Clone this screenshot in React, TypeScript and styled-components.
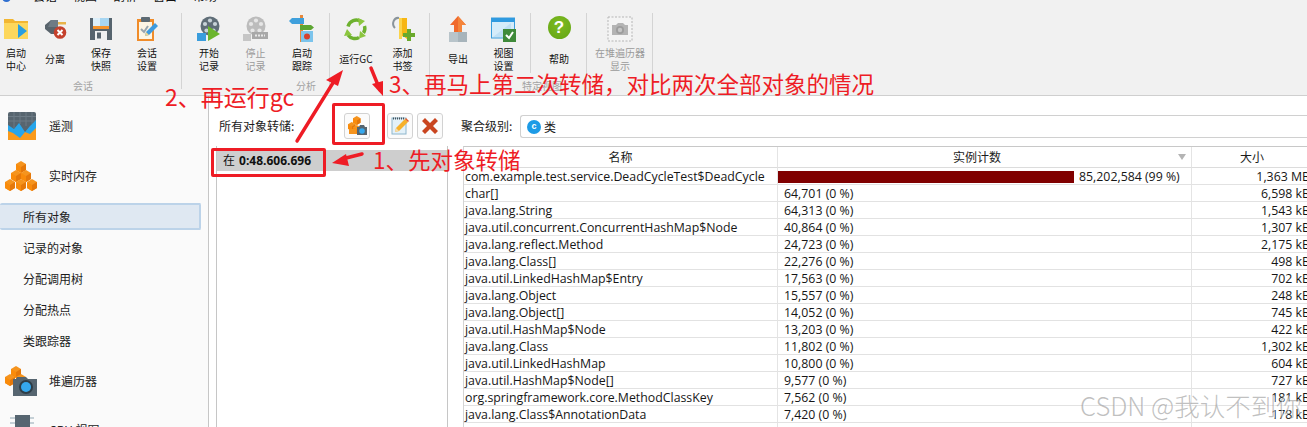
import React from 'react';
import styled, {createGlobalStyle} from 'styled-components';

const UI_FONT = '"Open Sans", "Noto Sans CJK SC", sans-serif';
const CJK_FONT = '"Noto Sans CJK SC", "Open Sans", sans-serif';
const RED = '#ee1c25';

const GlobalStyle = createGlobalStyle`
  html, body {
    margin: 0;
    padding: 0;
    background: #fff;
  }
  * {
    box-sizing: border-box;
  }
`;

/* ---------- icons ---------- */

const FolderIcon = () => (
  <svg width="26" height="24" viewBox="0 0 26 24">
    <path d="M1 2h9l2 2h13v18H1z" fill="#f2b632" />
    <rect x="1" y="6" width="24" height="16" fill="#fdd75c" />
    <path d="M15 7l9 7-9 7z" fill="#2a9fe0" />
  </svg>
);

const PlugIcon = () => (
  <svg width="26" height="24" viewBox="0 0 26 24">
    <rect x="15" y="5" width="9" height="2.5" fill="#e8b34a" />
    <path d="M3 8l6-5h7v14H9l-6-5z" fill="#59646c" />
    <path d="M9 3h7v7H6z" fill="#6f7b84" />
    <circle cx="18" cy="15.5" r="6.3" fill="#c5412c" />
    <path d="M15.5 13l5 5m0-5l-5 5" stroke="#fff" strokeWidth="2" />
  </svg>
);

const FloppyIcon = () => (
  <svg width="24" height="24" viewBox="0 0 24 24">
    <path d="M1 1h22v22H1z" fill="#56646e" />
    <rect x="4" y="1" width="16" height="9" fill="#dceffa" />
    <rect x="11" y="1" width="9" height="9" fill="#a7d6f2" />
    <rect x="4" y="9" width="16" height="3" fill="#f5942b" />
    <rect x="6" y="14" width="12" height="9" fill="#eef0f1" />
    <rect x="8" y="15.5" width="4" height="6" fill="#56646e" />
  </svg>
);

const SessionIcon = () => (
  <svg width="24" height="26" viewBox="0 0 24 26">
    <rect x="2" y="3" width="17" height="22" fill="#f08c2a" />
    <rect x="4" y="6" width="13" height="17" fill="#fdf5e4" />
    <rect x="6" y="1" width="9" height="5" rx="1" fill="#5d6a73" />
    <path d="M6 13l3 3 4-6" stroke="#9aa5ad" strokeWidth="2" fill="none" />
    <path d="M10 20l1-4 9-9 3 3-9 9z" fill="#3d9be0" />
    <path d="M10 20l1-4 3 3z" fill="#f4d58a" />
  </svg>
);

const ReelIcon = ({muted}: {muted?: boolean}) => (
  <svg width="27" height="26" viewBox="0 0 27 26">
    <circle cx="14" cy="10" r="9.5" fill={muted ? '#bcbcbc' : '#5f6d77'} />
    {[[14, 4.5], [19, 8], [17.5, 14.5], [10.5, 14.5], [9, 8]].map(([x, y]) => (
      <circle key={`${x}-${y}`} cx={x} cy={y} r="2.1" fill={muted ? '#e6e6e6' : '#c8d2d8'} />
    ))}
    {muted ? (
      <>
        <rect x="1" y="18" width="8" height="7" fill="#c6c6c6" />
        <path d="M10 16h16v7H10z" fill="#a8a8a8" />
        <path d="M13 19.5h10" stroke="#e8e8e8" strokeWidth="2" strokeDasharray="2 1" />
      </>
    ) : (
      <>
        <rect x="1" y="17" width="9" height="8" fill="#3a9ddc" />
        <path d="M12 10l12 8-12 7z" fill="#6cb52d" />
      </>
    )}
  </svg>
);

const TrackIcon = () => (
  <svg width="26" height="28" viewBox="0 0 26 28">
    <rect x="11" y="0" width="3" height="27" fill="#e8883a" />
    <path d="M0 6l3-3h12v6H3z" fill="#3fa0dc" />
    <path d="M11 10h11l3 2.5-3 2.5H11z" fill="#5da632" />
    <rect x="12" y="16" width="12" height="11" fill="#7cc4ec" />
    <circle cx="18" cy="21.5" r="3" fill="#d6402b" />
  </svg>
);

const RecycleIcon = () => (
  <svg width="26" height="24" viewBox="0 0 26 24">
    <g fill="none" stroke="#6db12f" strokeWidth="3.4">
      <path d="M5 9.5a8.5 8.5 0 0 1 13-5" />
      <path d="M21.5 9a8.5 8.5 0 0 1-1 7" />
      <path d="M16 20.5a8.5 8.5 0 0 1-11-2.5" />
    </g>
    <path d="M15 1l7 3-6 5zM23 19l-7 2.5 1-7.5zM1 19l3-7 5 6z" fill="#8cc63f" />
  </svg>
);

const BookmarkIcon = () => (
  <svg width="26" height="26" viewBox="0 0 26 26">
    <path d="M5 12C1 8 4 1 9 2" stroke="#8a949b" strokeWidth="2" fill="none" />
    <path d="M9 2h8v21l-4-3-4 3z" fill="#f7b614" />
    <rect x="9" y="2" width="3" height="21" fill="#fbd44c" />
    <path d="M17 13h4v4h4v4h-4v4h-4v-4h-4v-4h4z" fill="#6aa92c" />
  </svg>
);

const ExportIcon = () => (
  <svg width="20" height="26" viewBox="0 0 20 26">
    <path d="M10 0l8 9h-4v7H6V9H2z" fill="#f0692b" />
    <path d="M10 0l8 9h-4v7h-4z" fill="#f4843a" />
    <rect x="1" y="16" width="18" height="10" fill="#b8c4ca" />
    <rect x="10" y="16" width="9" height="10" fill="#a7b4bb" />
  </svg>
);

const ViewSettingsIcon = () => (
  <svg width="25" height="25" viewBox="0 0 25 25">
    <rect x="0.5" y="1" width="23" height="20" fill="#d5ecfa" stroke="#3a9ddc" />
    <rect x="0.5" y="1" width="23" height="4" fill="#2f9ae0" />
    <path d="M2 20L20 6v14z" fill="#bfe0f5" />
    <rect x="12" y="12" width="13" height="13" fill="#3f8a3a" />
    <path d="M15 18l3 3 4-6" stroke="#fff" strokeWidth="2" fill="none" />
  </svg>
);

const HelpDisc = styled.span`
  display: flex;
  align-items: center;
  justify-content: center;
  width: 23px;
  height: 23px;
  margin-top: -3px;
  border-radius: 50%;
  background: radial-gradient(circle at 50% 35%, #7ebb22, #62a413);
  color: #fff;
  font: 700 17px/1 "Liberation Sans", sans-serif;
`;

const CameraGhostIcon = () => (
  <svg width="26" height="26" viewBox="0 0 26 26">
    <rect x="1" y="1" width="24" height="24" fill="#f4f4f4" stroke="#b5b5b5" strokeDasharray="2 1.5" />
    <path d="M5 9h4l2-2h5l2 2h3v10H5z" fill="#b4b4b4" />
    <circle cx="13" cy="14" r="4" fill="#9d9d9d" />
    <circle cx="13" cy="14" r="2.2" fill="#c6c6c6" />
  </svg>
);

const TelemetryIcon = () => (
  <svg width="30" height="30" viewBox="0 0 30 30">
    <rect x="1" y="1" width="28" height="28" rx="2" fill="#57656f" />
    <path d="M1 10h28M1 5.5h28M7 1v16M13 1v12M19 1v14M25 1v12" stroke="#6d7b85" />
    <path d="M1 14l6 4 5-6 6 9 5-6 6-6v20H1z" fill="#27a5ea" />
    <path d="M1 20l5 2 7 5 5-6 5 2 6-6v12H1z" fill="#f99a1c" />
  </svg>
);

const Cube = ({x, y, s = 1}: {x: number; y: number; s?: number}) => (
  <g transform={`translate(${x} ${y}) scale(${s})`}>
    <path d="M5 0l5 3v6l-5 3-5-3V3z" fill="#f5941e" />
    <path d="M5 6l5-3v6l-5 3z" fill="#e5780a" />
    <path d="M5 6L0 3v6l5 3z" fill="#f98b0b" />
  </g>
);

const MemoryIcon = () => (
  <svg width="33" height="30" viewBox="0 0 33 30">
    <Cube x={11} y={0} />
    <Cube x={6} y={9} />
    <Cube x={16} y={9} />
    <Cube x={0} y={18} />
    <Cube x={11} y={18} />
    <Cube x={22} y={18} />
  </svg>
);

const HeapIcon = () => (
  <svg width="33" height="31" viewBox="0 0 33 31">
    <Cube x={6} y={0} />
    <Cube x={0} y={8} />
    <Cube x={11} y={8} />
    <path d="M8 13h3l1-2h9l2 2h9v17H8z" fill="#566570" />
    <circle cx="21" cy="21" r="7" fill="#2e3d47" />
    <circle cx="21" cy="21" r="5" fill="#35a8ee" />
  </svg>
);

const DumpIcon = () => (
  <svg width="21" height="20" viewBox="0 0 21 20">
    <Cube x={6} y={0} s={0.75} />
    <Cube x={1} y={6} s={0.75} />
    <Cube x={6} y={9} s={0.75} />
    <rect x="2" y="13" width="7" height="5" fill="#f5941e" />
    <path d="M10 11h2l1-2h4l1 2h2v8H10z" fill="#566570" />
    <circle cx="15" cy="15" r="2.8" fill="#35a8ee" />
  </svg>
);

const NotepadIcon = () => (
  <svg width="19" height="19" viewBox="0 0 19 19">
    <rect x="1" y="2" width="14" height="16" fill="#e3f1f9" stroke="#8eb6cc" />
    <path d="M2 2.5h12" stroke="#46525a" strokeWidth="2" strokeDasharray="1 1" />
    <path d="M4 16l1-4 9-9 3 3-9 9z" fill="#f7b12b" />
    <path d="M4 16l1-4 3 3z" fill="#f4dcae" />
    <path d="M14 3l3 3 1-1-3-3z" fill="#e65a2b" />
  </svg>
);

const RemoveIcon = () => (
  <svg width="18" height="18" viewBox="0 0 18 18">
    <path d="M1 4l3-3 5 5 5-5 3 3-5 5 5 5-3 3-5-5-5 5-3-3 5-5z" fill="#c9451f" />
  </svg>
);

const ChipIcon = () => (
  <svg width="26" height="30" viewBox="0 0 26 30">
    <rect x="6" y="0" width="15" height="30" fill="#566570" />
    <path d="M1 3h5M1 8h5M21 3h4M21 8h4" stroke="#c5d0d6" strokeWidth="2" />
  </svg>
);

/* ---------- ribbon ---------- */

const Ribbon = styled.header`
  height: 96px;
  background: #f1f1f1;
  border-bottom: 1px solid #cfcfcf;
  flex: none;
`;

const MenuBar = styled.div`
  height: 2px;
  overflow: hidden;
  display: flex;
  align-items: flex-end;
  gap: 16px;
  font: 12px/12px ${CJK_FONT};
  color: #111;
`;

const AppDot = styled.span`
  width: 9px;
  height: 9px;
  flex: none;
  margin: 0 6px 0 2px;
  border-radius: 50%;
  background: #2f6fd0;
`;

const RibbonRow = styled.div`
  display: flex;
  height: 93px;
  padding-top: 11px;
`;

const Group = styled.section<{$w: number; $sep?: boolean}>`
  width: ${p => p.$w}px;
  flex: none;
  display: flex;
  flex-direction: column;
  ${p => p.$sep && 'border-right: 1px solid #d4d4d4;'}
  height: 76px;
`;

const Clusters = styled.div`
  display: flex;
  height: 60px;
`;

const Cluster = styled.div<{$w?: number; $pad?: number; $sep?: boolean}>`
  display: flex;
  ${p => (p.$w ? `width: ${p.$w}px;` : 'flex: 1;')}
  padding-left: ${p => p.$pad ?? 0}px;
  ${p => p.$sep && 'border-right: 1px solid #d4d4d4;'}
`;

const Tool = styled.div<{$w?: number; $muted?: boolean}>`
  width: ${p => p.$w ?? 46}px;
  flex: none;
  display: flex;
  flex-direction: column;
  align-items: center;
  color: ${p => (p.$muted ? '#9a9a9a' : '#111')};
`;

const ToolIcon = styled.div`
  height: 30px;
  margin-top: 2px;
  display: flex;
  align-items: center;
  justify-content: center;
`;

const ToolLabel = styled.div`
  height: 30px;
  margin-top: 1px;
  display: flex;
  align-items: center;
  justify-content: center;
  text-align: center;
  white-space: pre-line;
  font: 10px/13px ${CJK_FONT};
`;

const GroupLabel = styled.div<{$right: number}>`
  height: 14px;
  margin-top: 6px;
  font: 10px/14px ${CJK_FONT};
  color: #a3a3a3;
  text-align: right;
  padding-right: ${p => p.$right}px;
`;

/* ---------- sidebar ---------- */

const Main = styled.div`
  flex: 1;
  display: flex;
  min-height: 0;
`;

const Sidebar = styled.nav`
  width: 209px;
  flex: none;
  background: #fafafa;
  border-right: 1px solid #c6c6c6;
  padding-top: 15px;
  overflow: hidden;
`;

const SideSection = styled.div<{$h: number; $mt?: number}>`
  height: ${p => p.$h}px;
  margin-top: ${p => p.$mt ?? 0}px;
  display: flex;
  align-items: center;
`;

const SideIcon = styled.div`
  width: 49px;
  flex: none;
  display: flex;
  justify-content: center;
  padding-right: 6px;
`;

const SideText = styled.span`
  font: 12px/16px ${CJK_FONT};
  color: #222;
`;

const SideList = styled.div`
  width: 201px;
  margin-top: 12px;
`;

const SideItem = styled.div<{$active?: boolean}>`
  height: 31px;
  display: flex;
  align-items: center;
  padding-left: 23px;
  font: 12px/16px ${CJK_FONT};
  color: #1c1c1c;
  ${p =>
    p.$active &&
    `
    height: 27px;
    margin: 2px 0;
    background: #dfe8f2;
    border: 2px solid #bcd3e9;
    border-left: none;
    border-radius: 2px;
  `}
`;

/* ---------- content ---------- */

const Content = styled.div`
  flex: 1;
  min-width: 0;
  display: flex;
  flex-direction: column;
  background: #fff;
`;

const DumpBar = styled.div`
  height: 50px;
  flex: none;
  display: flex;
  align-items: center;
  padding: 9px 0 0 10px;
  font: 12px/16px ${CJK_FONT};
  color: #1c1c1c;
`;

const DumpLabel = styled.span<{$w: number; $ml?: number}>`
  width: ${p => p.$w}px;
  margin-left: ${p => p.$ml ?? 0}px;
  flex: none;
`;

const IconButton = styled.button<{$ml: number}>`
  width: 26px;
  height: 26px;
  margin-left: ${p => p.$ml}px;
  padding: 0;
  display: flex;
  flex: none;
  align-items: center;
  justify-content: center;
  background: #fbfbfb;
  border: 1px solid #d2d2d2;
  border-radius: 3px;
`;

const LevelSelect = styled.div`
  flex: 1;
  height: 23px;
  margin-top: 2px;
  display: flex;
  align-items: center;
  gap: 3px;
  padding-left: 6px;
  border: 1px solid #d0d0d0;
  border-right: none;
  border-radius: 3px 0 0 3px;
`;

const ClassBadge = styled.span`
  width: 14px;
  height: 14px;
  border-radius: 50%;
  background: #1d9be6;
  color: #fff;
  display: flex;
  align-items: center;
  justify-content: center;
  font: 700 9px/1 "Liberation Sans", sans-serif;
`;

const Body = styled.div`
  flex: 1;
  min-height: 0;
  display: flex;
`;

const DumpList = styled.div`
  width: 232px;
  flex: none;
  margin-left: 7px;
  padding-top: 4px;
  border-left: 1px solid #c6c6c6;
  border-right: 1px solid #c6c6c6;
`;

const DumpRow = styled.div`
  height: 21px;
  display: flex;
  align-items: center;
  gap: 4px;
  padding-left: 6px;
  background: #cecece;
  font: 12px/16px ${UI_FONT};
  color: #111;
  b {
    font-weight: 700;
  }
`;

const Table = styled.div`
  margin-left: 15px;
  width: 860px;
  flex: none;
  border-top: 1px solid #c8c8c8;
  border-left: 1px solid #d4d4d4;
`;

const Columns = styled.div`
  display: grid;
  grid-template-columns: 314px 414px 121px;
`;

const HeadCell = styled.div<{$pr?: number}>`
  position: relative;
  height: 21px;
  padding-right: ${p => p.$pr ?? 0}px;
  text-align: center;
  font: 12px/20px ${CJK_FONT};
  color: #1c1c1c;
  border-bottom: 1px solid #dcdcdc;
  border-right: 1px solid #e4e4e4;
`;

const SortMark = styled.span`
  position: absolute;
  right: 5px;
  top: 7px;
  border-left: 4.5px solid transparent;
  border-right: 4.5px solid transparent;
  border-top: 6px solid #b4b4b4;
`;

const Cell = styled.div<{$align?: string; $pad?: number}>`
  height: 17px;
  padding: 1px ${p => p.$pad ?? 1}px 0;
  text-align: ${p => p.$align ?? 'left'};
  font: 12.33px/16px ${UI_FONT};
  color: #161616;
  white-space: nowrap;
  overflow: hidden;
  border-bottom: 1px solid #e2e2e2;
  border-right: 1px solid #e4e4e4;
`;

const BarCell = styled(Cell)`
  display: flex;
  align-items: center;
  gap: 5px;
  padding: 1px 0 0;
`;

const Bar = styled.span<{$w: number}>`
  width: ${p => p.$w}px;
  height: 12px;
  background: #800000;
  flex: none;
`;

/* ---------- annotations over the screenshot ---------- */

const Page = styled.div`
  position: relative;
  width: 1307px;
  height: 427px;
  overflow: hidden;
  display: flex;
  flex-direction: column;
`;

const Note = styled.div<{$x: number; $y: number; $size: number}>`
  position: absolute;
  left: ${p => p.$x}px;
  top: ${p => p.$y}px;
  font: ${p => p.$size}px/30px ${CJK_FONT};
  color: ${RED};
  white-space: nowrap;
`;

const Frame = styled.div<{$x: number; $y: number; $w: number; $h: number}>`
  position: absolute;
  left: ${p => p.$x}px;
  top: ${p => p.$y}px;
  width: ${p => p.$w}px;
  height: ${p => p.$h}px;
  border: 3px solid ${RED};
  border-radius: 2px;
`;

const ArrowLayer = styled.svg`
  position: absolute;
  left: 0;
  top: 0;
  pointer-events: none;
`;

const Watermark = styled.div`
  position: absolute;
  left: 1080px;
  top: 390px;
  font: 300 25.5px/30px ${CJK_FONT};
  color: rgba(130, 130, 130, 0.5);
  text-shadow: 1px 1px 1px rgba(255, 255, 255, 0.8);
  white-space: nowrap;
`;

const rows = [
  ['com.example.test.service.DeadCycleTest$DeadCycle', '85,202,584 (99 %)', '1,363 MB'],
  ['char[]', '64,701 (0 %)', '6,598 kB'],
  ['java.lang.String', '64,313 (0 %)', '1,543 kB'],
  ['java.util.concurrent.ConcurrentHashMap$Node', '40,864 (0 %)', '1,307 kB'],
  ['java.lang.reflect.Method', '24,723 (0 %)', '2,175 kB'],
  ['java.lang.Class[]', '22,276 (0 %)', '498 kB'],
  ['java.util.LinkedHashMap$Entry', '17,563 (0 %)', '702 kB'],
  ['java.lang.Object', '15,557 (0 %)', '248 kB'],
  ['java.lang.Object[]', '14,052 (0 %)', '745 kB'],
  ['java.util.HashMap$Node', '13,203 (0 %)', '422 kB'],
  ['java.lang.Class', '11,802 (0 %)', '1,302 kB'],
  ['java.util.LinkedHashMap', '10,800 (0 %)', '604 kB'],
  ['java.util.HashMap$Node[]', '9,577 (0 %)', '727 kB'],
  ['org.springframework.core.MethodClassKey', '7,562 (0 %)', '181 kB'],
  ['java.lang.Class$AnnotationData', '7,420 (0 %)', '178 kB'],
  ['', '', ''],
];

const sessionTools = [
  {label: '启动\n中心', icon: <FolderIcon />, w: 32},
  {label: '分离', icon: <PlugIcon />},
  {label: '保存\n快照', icon: <FloppyIcon />},
  {label: '会话\n设置', icon: <SessionIcon />},
];

const RibbonTool = ({label, icon, w, muted}: {label: string; icon: React.ReactNode; w?: number; muted?: boolean}) => (
  <Tool $w={w} $muted={muted}>
    <ToolIcon>{icon}</ToolIcon>
    <ToolLabel>{label}</ToolLabel>
  </Tool>
);

export default function App() {
  return (
    <Page>
      <GlobalStyle />
      <Ribbon>
        <MenuBar>
          <AppDot />
          <span>会话</span>
          <span>视图</span>
          <span>剖析</span>
          <span>窗口</span>
          <span>帮助</span>
        </MenuBar>
        <RibbonRow>
          <Group $w={182} $sep>
            <Clusters>
              {sessionTools.map(t => (
                <RibbonTool key={t.label} {...t} />
              ))}
            </Clusters>
            <GroupLabel $right={88}>会话</GroupLabel>
          </Group>
          <Group $w={148} $sep>
            <Clusters>
              <Cluster $pad={4}>
                <RibbonTool label={'开始\n记录'} icon={<ReelIcon />} />
                <RibbonTool label={'停止\n记录'} icon={<ReelIcon muted />} w={47} muted />
                <RibbonTool label={'启动\n跟踪'} icon={<TrackIcon />} />
              </Cluster>
            </Clusters>
            <GroupLabel $right={13}>分析</GroupLabel>
          </Group>
          <Group $w={100} $sep>
            <Clusters>
              <Cluster $pad={3}>
                <RibbonTool label="运行GC" icon={<RecycleIcon />} />
                <RibbonTool label={'添加\n书签'} icon={<BookmarkIcon />} w={47} />
              </Cluster>
            </Clusters>
          </Group>
          <Group $w={157} $sep>
            <Clusters>
              <Cluster $w={101} $pad={5} $sep>
                <RibbonTool label="导出" icon={<ExportIcon />} />
                <RibbonTool label={'视图\n设置'} icon={<ViewSettingsIcon />} w={45} />
              </Cluster>
              <Cluster $pad={5}>
                <RibbonTool label="帮助" icon={<HelpDisc>?</HelpDisc>} />
              </Cluster>
            </Clusters>
            <GroupLabel $right={24}>特定视图</GroupLabel>
          </Group>
          <Group $w={66} $sep>
            <Clusters>
              <RibbonTool label={'在堆遍历器\n显示'} icon={<CameraGhostIcon />} w={66} muted />
            </Clusters>
          </Group>
        </RibbonRow>
      </Ribbon>

      <Main>
        <Sidebar>
          <SideSection $h={30}>
            <SideIcon><TelemetryIcon /></SideIcon>
            <SideText>遥测</SideText>
          </SideSection>
          <SideSection $h={30} $mt={20}>
            <SideIcon><MemoryIcon /></SideIcon>
            <SideText>实时内存</SideText>
          </SideSection>
          <SideList>
            <SideItem $active>所有对象</SideItem>
            <SideItem>记录的对象</SideItem>
            <SideItem>分配调用树</SideItem>
            <SideItem>分配热点</SideItem>
            <SideItem>类跟踪器</SideItem>
          </SideList>
          <SideSection $h={50}>
            <SideIcon><HeapIcon /></SideIcon>
            <SideText>堆遍历器</SideText>
          </SideSection>
          <SideSection $h={30} $mt={9}>
            <SideIcon><ChipIcon /></SideIcon>
            <SideText>CPU 视图</SideText>
          </SideSection>
        </Sidebar>

        <Content>
          <DumpBar>
            <DumpLabel $w={125}>所有对象转储:</DumpLabel>
            <IconButton $ml={0}><DumpIcon /></IconButton>
            <IconButton $ml={17}><NotepadIcon /></IconButton>
            <IconButton $ml={4}><RemoveIcon /></IconButton>
            <DumpLabel $w={59} $ml={18}>聚合级别:</DumpLabel>
            <LevelSelect>
              <ClassBadge>c</ClassBadge>
              类
            </LevelSelect>
          </DumpBar>

          <Body>
            <DumpList>
              <DumpRow>
                在 <b>0:48.606.696</b>
              </DumpRow>
            </DumpList>
            <Table>
              <Columns>
                <HeadCell>名称</HeadCell>
                <HeadCell $pr={15}>
                  实例计数
                  <SortMark />
                </HeadCell>
                <HeadCell>大小</HeadCell>
                {rows.map(([name, count, size], i) => (
                  <React.Fragment key={name || i}>
                    <Cell>{name}</Cell>
                    {i === 0 ? (
                      <BarCell>
                        <Bar $w={296} />
                        {count}
                      </BarCell>
                    ) : (
                      <Cell $pad={6}>{count}</Cell>
                    )}
                    <Cell $align="right" $pad={2}>{size}</Cell>
                  </React.Fragment>
                ))}
              </Columns>
            </Table>
          </Body>
        </Content>
      </Main>

      <Frame $x={332} $y={103} $w={53} $h={42} />
      <Frame $x={211} $y={148} $w={115} $h={29} />
      <ArrowLayer width="1307" height="427" viewBox="0 0 1307 427">
        <g stroke={RED} strokeWidth="3.4" strokeLinecap="round" fill="none">
          <path d="M297 141L336 78" />
          <path d="M371 68L380 90" />
          <path d="M362 154L342 159" />
        </g>
        <g fill={RED}>
          <path d="M343 70L338 86L326 80z" />
          <path d="M383 96L372 84L383 81z" />
          <path d="M332 163L346 154L349 166z" />
        </g>
      </ArrowLayer>
      <Note $x={165} $y={81} $size={23}>2、再运行gc</Note>
      <Note $x={389} $y={68} $size={22.5}>3、再马上第二次转储，对比两次全部对象的情况</Note>
      <Note $x={373} $y={144} $size={22.5}>1、先对象转储</Note>
      <Watermark>CSDN @我认不到你</Watermark>
    </Page>
  );
}
